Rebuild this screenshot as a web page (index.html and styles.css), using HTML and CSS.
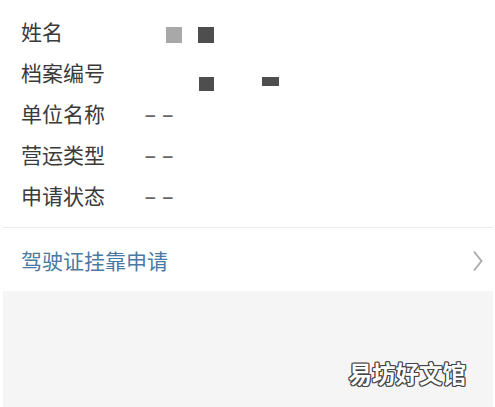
FILE: index.html
```html
<!DOCTYPE html>
<html lang="zh">
<head>
<meta charset="utf-8">
<link rel="stylesheet" href="styles.css">
</head>
<body>
<div class="page">
  <div class="info">
    <div class="row"><span class="label">姓名</span><span class="value"><i class="blk light b1"></i><i class="blk dark b2"></i></span></div>
    <div class="row"><span class="label">档案编号</span><span class="value"><i class="blk dark b3"></i><i class="blk dark b4"></i></span></div>
    <div class="row"><span class="label">单位名称</span><span class="value dash">––</span></div>
    <div class="row"><span class="label">营运类型</span><span class="value dash">––</span></div>
    <div class="row"><span class="label">申请状态</span><span class="value dash">––</span></div>
  </div>
  <div class="link">
    <span class="link-text">驾驶证挂靠申请</span>
    <svg class="chev" width="12" height="22" viewBox="0 0 12 22"><path d="M2 1.5 L9.5 11 L2 20.5" fill="none" stroke="#ababab" stroke-width="1.9"/></svg>
  </div>
  <div class="band">
    <span class="mark">易坊好文馆</span>
  </div>
</div>
</body>
</html>
```
FILE: styles.css
```css
html, body {
  margin: 0;
  padding: 0;
  background: #fff;
}
.page {
  width: 495px;
  height: 407px;
  display: flex;
  flex-direction: column;
  font-family: "Noto Sans CJK SC", "Noto Sans", sans-serif;
  overflow: hidden;
}
.info {
  margin: 0 2px 0 3px;
  padding: 12px 0 10px 18px;
  border-bottom: 1px solid #ececec;
}
.row {
  height: 41px;
  display: flex;
  align-items: center;
}
.label {
  width: 124px;
  font-size: 21px;
  color: #3a3a3a;
  line-height: 41px;
  margin-top: -2px;
}
.value {
  display: flex;
  align-items: center;
  height: 41px;
  flex: 1;
}
.dash {
  font-family: "Liberation Sans", sans-serif;
  font-size: 19px;
  font-weight: bold;
  color: #666;
  letter-spacing: 7px;
}
.blk {
  display: block;
}
.light { background: #a8a8a8; }
.dark { background: #4e4e4e; }
.b1 { width: 16px; height: 16px; margin-left: 21px; margin-top: 4px; }
.b2 { width: 16px; height: 16px; margin-left: 16px; margin-top: 4px; }
.b3 { width: 15px; height: 14px; margin-left: 54px; margin-top: 20px; }
.b4 { width: 17px; height: 9px; margin-left: 48px; margin-top: 16px; }
.link {
  height: 63px;
  margin: 0 2px 0 3px;
  padding: 0 9px 0 18px;
  display: flex;
  align-items: center;
  justify-content: space-between;
}
.link-text {
  font-size: 21px;
  color: #4a7aa2;
}
.chev {
  margin-top: 2px;
}
.band {
  flex: 1;
  margin: 0 2px 0 3px;
  background: #f5f5f5;
  display: flex;
  justify-content: flex-end;
  align-items: flex-start;
  padding-right: 27px;
}
.mark {
  margin-top: 68px;
  font-size: 23.5px;
  font-weight: bold;
  color: #fff;
  text-shadow: 1px 0 0 #444, -1px 0 0 #444, 0 1px 0 #444, 0 -1px 0 #444, 1px 1px 0 #444, -1px -1px 0 #444, 1px -1px 0 #444, -1px 1px 0 #444;
  font-family: "Noto Sans CJK SC", sans-serif;
  line-height: 28px;
}
```
